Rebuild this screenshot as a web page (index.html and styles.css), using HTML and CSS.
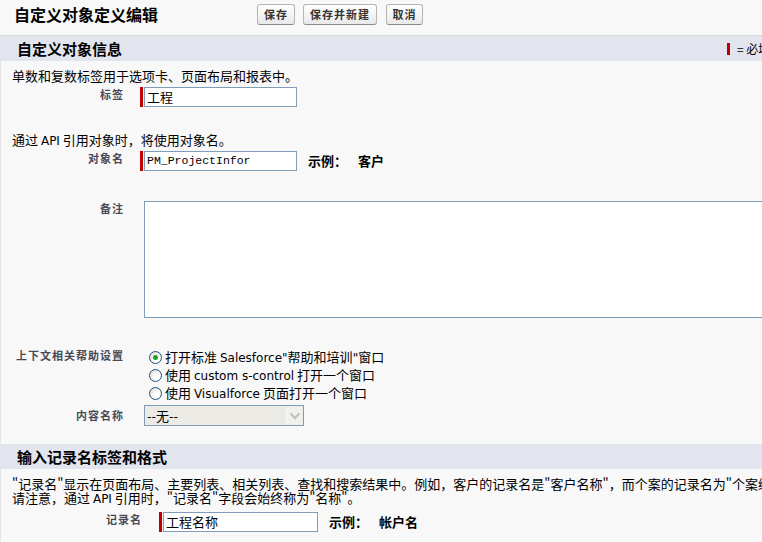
FILE: index.html
```html
<!DOCTYPE html>
<html lang="zh-CN">
<head>
<meta charset="utf-8">
<title>自定义对象定义编辑</title>
<link rel="stylesheet" href="styles.css">
</head>
<body>
<div class="topbar">
  <h1 class="title">自定义对象定义编辑</h1>
  <div class="btns">
    <button class="btn btn-save">保存</button>
    <button class="btn btn-savenew">保存并新建</button>
    <button class="btn btn-cancel">取消</button>
  </div>
</div>

<div class="subheader">
  <h2 class="subtitle">自定义对象信息</h2>
  <div class="legend"><span class="reqbar small"></span><span class="legend-text">= 必填信息</span></div>
</div>

<div class="section sec1">
  <p class="desc">单数和复数标签用于选项卡、页面布局和报表中。</p>
  <div class="row r-label">
    <div class="lbl">标签</div>
    <div class="field"><span class="reqbar"></span><div class="input">工程</div></div>
  </div>

  <p class="desc d2">通过 <span class="lat">API</span> 引用对象时，将使用对象名。</p>
  <div class="row r-objname">
    <div class="lbl">对象名</div>
    <div class="field"><span class="reqbar"></span><div class="input mono">PM_ProjectInfor</div><span class="ex">示例：</span><span class="ex exv">客户</span></div>
  </div>

  <div class="row r-desc">
    <div class="lbl">备注</div>
    <div class="field"><div class="textarea"></div></div>
  </div>

  <div class="row r-help">
    <div class="lbl">上下文相关帮助设置</div>
    <div class="field radios">
      <div class="opt"><span class="radio checked"></span><span>打开标准 <span class="lat">Salesforce"</span>帮助和培训<span class="lat">"</span>窗口</span></div>
      <div class="opt"><span class="radio"></span><span>使用 <span class="lat">custom s-control</span> 打开一个窗口</span></div>
      <div class="opt"><span class="radio"></span><span>使用 <span class="lat">Visualforce</span> 页面打开一个窗口</span></div>
    </div>
  </div>

  <div class="row r-content">
    <div class="lbl">内容名称</div>
    <div class="field">
      <div class="select"><span class="sel-val">--无--</span><span class="sel-arrow"><svg width="12" height="8" viewBox="0 0 12 8"><path d="M1.5 1.5 L6 6 L10.5 1.5" fill="none" stroke="#c4c4c4" stroke-width="2.4"/></svg></span></div>
    </div>
  </div>
</div>

<div class="subheader sh2">
  <h2 class="subtitle">输入记录名标签和格式</h2>
</div>

<div class="section sec2">
  <p class="desc">"记录名"显示在页面布局、主要列表、相关列表、查找和搜索结果中。例如，客户的记录名是"客户名称"，而个案的记录名为"个案编号"。</p>
  <p class="desc">请注意，通过 <span class="lat">API</span> 引用时，"记录名"字段会始终称为"名称"。</p>
  <div class="row wide r-record">
    <div class="lbl">记录名</div>
    <div class="field"><span class="reqbar"></span><div class="input inp2">工程名称</div><span class="ex">示例：</span><span class="ex exv">帐户名</span></div>
  </div>
</div>
</body>
</html>
```

FILE: styles.css
```css
html, body {
  margin: 0;
  padding: 0;
  overflow: hidden;
}
body {
  width: 762px;
  height: 542px;
  background: #f8f8f8;
  font-family: "Noto Sans CJK SC", "DejaVu Sans", sans-serif;
  font-size: 13px;
  line-height: 14px;
  color: #000;
}
.lat {
  font-family: "DejaVu Sans", "Noto Sans CJK SC", sans-serif;
  font-size: 12px;
}
.topbar {
  height: 36px;
  box-sizing: border-box;
  border-bottom: 1px solid #d8d8d8;
  display: flex;
  align-items: flex-start;
  padding: 4px 0 0 14px;
}
.title {
  margin: 0;
  width: 243px;
  font-size: 16px;
  font-weight: bold;
  line-height: 21px;
  white-space: nowrap;
}
.btns {
  display: flex;
  gap: 8px;
}
.btn {
  height: 21px;
  box-sizing: border-box;
  border: 1px solid #b5b5b5;
  border-bottom-color: #8c8c8c;
  border-radius: 3px;
  background: linear-gradient(#ffffff, #e9e9e9);
  font-family: "Noto Sans CJK SC", sans-serif;
  font-size: 11px;
  font-weight: bold;
  letter-spacing: 1px;
  color: #333;
  padding: 0;
  line-height: 19px;
}
.btn-save { width: 38px; }
.btn-savenew { width: 74px; }
.btn-cancel { width: 37px; margin-left: 1px; }

.subheader {
  height: 25px;
  background: #e2e4ee;
  display: grid;
  grid-template-columns: 1fr 35px;
  align-items: center;
  padding-left: 17px;
}
.subtitle {
  margin: 0;
  font-size: 15px;
  font-weight: bold;
  line-height: 18px;
  white-space: nowrap;
}
.legend {
  display: flex;
  align-items: center;
  white-space: nowrap;
  font-size: 12px;
}
.legend-text { margin-left: 7px; }

.section {
  border-left: 1px solid #e6e6e6;
}
.sec1 {
  padding: 8px 0 18px;
}
.sec2 {
  padding: 8px 0 12px;
}
.desc {
  margin: 0;
  padding-left: 11px;
  white-space: nowrap;
}
.d2 { margin-top: 26px; }

.row {
  display: grid;
  grid-template-columns: 123px 1fr;
  column-gap: 16px;
}
.row.wide {
  grid-template-columns: 141px 1fr;
  column-gap: 17px;
}
.lbl {
  text-align: right;
  font-size: 11px;
  font-weight: bold;
  letter-spacing: 1px;
  color: #4a4a56;
  padding-top: 0;
  line-height: 14px;
  white-space: nowrap;
}
.field {
  display: flex;
  align-items: center;
  padding-left: 4px;
}
.field:has(.reqbar) { padding-left: 0; }
.reqbar {
  width: 3px;
  height: 20px;
  background: #c00000;
  margin-right: 1px;
  flex: none;
}
.reqbar.small { height: 12px; margin: 0; }
.input {
  width: 153px;
  height: 20px;
  box-sizing: border-box;
  border: 1px solid #7f9db9;
  background: #fff;
  padding-left: 2px;
  line-height: 18px;
  font-size: 13px;
  white-space: nowrap;
}
.input.mono {
  font-family: "Liberation Mono", monospace;
  font-size: 11.5px;
}
.inp2 { width: 155px; }
.ex {
  font-weight: bold;
  margin-left: 11px;
  white-space: nowrap;
}
.exv { margin-left: 11px; }

.r-label { margin-top: 4px; }
.r-objname { margin-top: 3px; }
.r-desc { margin-top: 30px; }
.textarea {
  width: 660px;
  height: 117px;
  box-sizing: border-box;
  border: 1px solid #7f9db9;
  background: #fff;
  flex: none;
}
.r-help { margin-top: 30px; }
.radios {
  flex-direction: column;
  align-items: flex-start;
  padding-left: 9px;
}
.opt {
  display: flex;
  align-items: center;
  height: 18px;
  white-space: nowrap;
}
.radio {
  width: 13px;
  height: 13px;
  box-sizing: border-box;
  border-radius: 50%;
  border: 1px solid #1c5180;
  background: radial-gradient(circle at 65% 70%, #ffffff 20%, #dcdcd4 90%);
  margin-right: 3px;
  margin-top: 1px;
  position: relative;
  flex: none;
}
.radio.checked::after {
  content: "";
  position: absolute;
  left: 3px;
  top: 3px;
  width: 5px;
  height: 5px;
  border-radius: 50%;
  background: #21a121;
}
.r-content { margin-top: 3px; }
.r-content .lbl { padding-top: 3px; }
.select {
  width: 160px;
  height: 21px;
  box-sizing: border-box;
  border: 1px solid #7f9db9;
  background: #ebeae4;
  display: flex;
  align-items: stretch;
}
.sel-val {
  flex: 1;
  padding-left: 2px;
  line-height: 19px;
  font-size: 13px;
}
.sel-arrow {
  width: 15px;
  margin: 1px 1px 1px 0;
  background: #f1f0ec;
  border-left: 1px solid #fafafa;
  display: flex;
  align-items: center;
  justify-content: center;
}

.sh2 { height: 25px; }
.r-record { margin-top: 6px; }
```
